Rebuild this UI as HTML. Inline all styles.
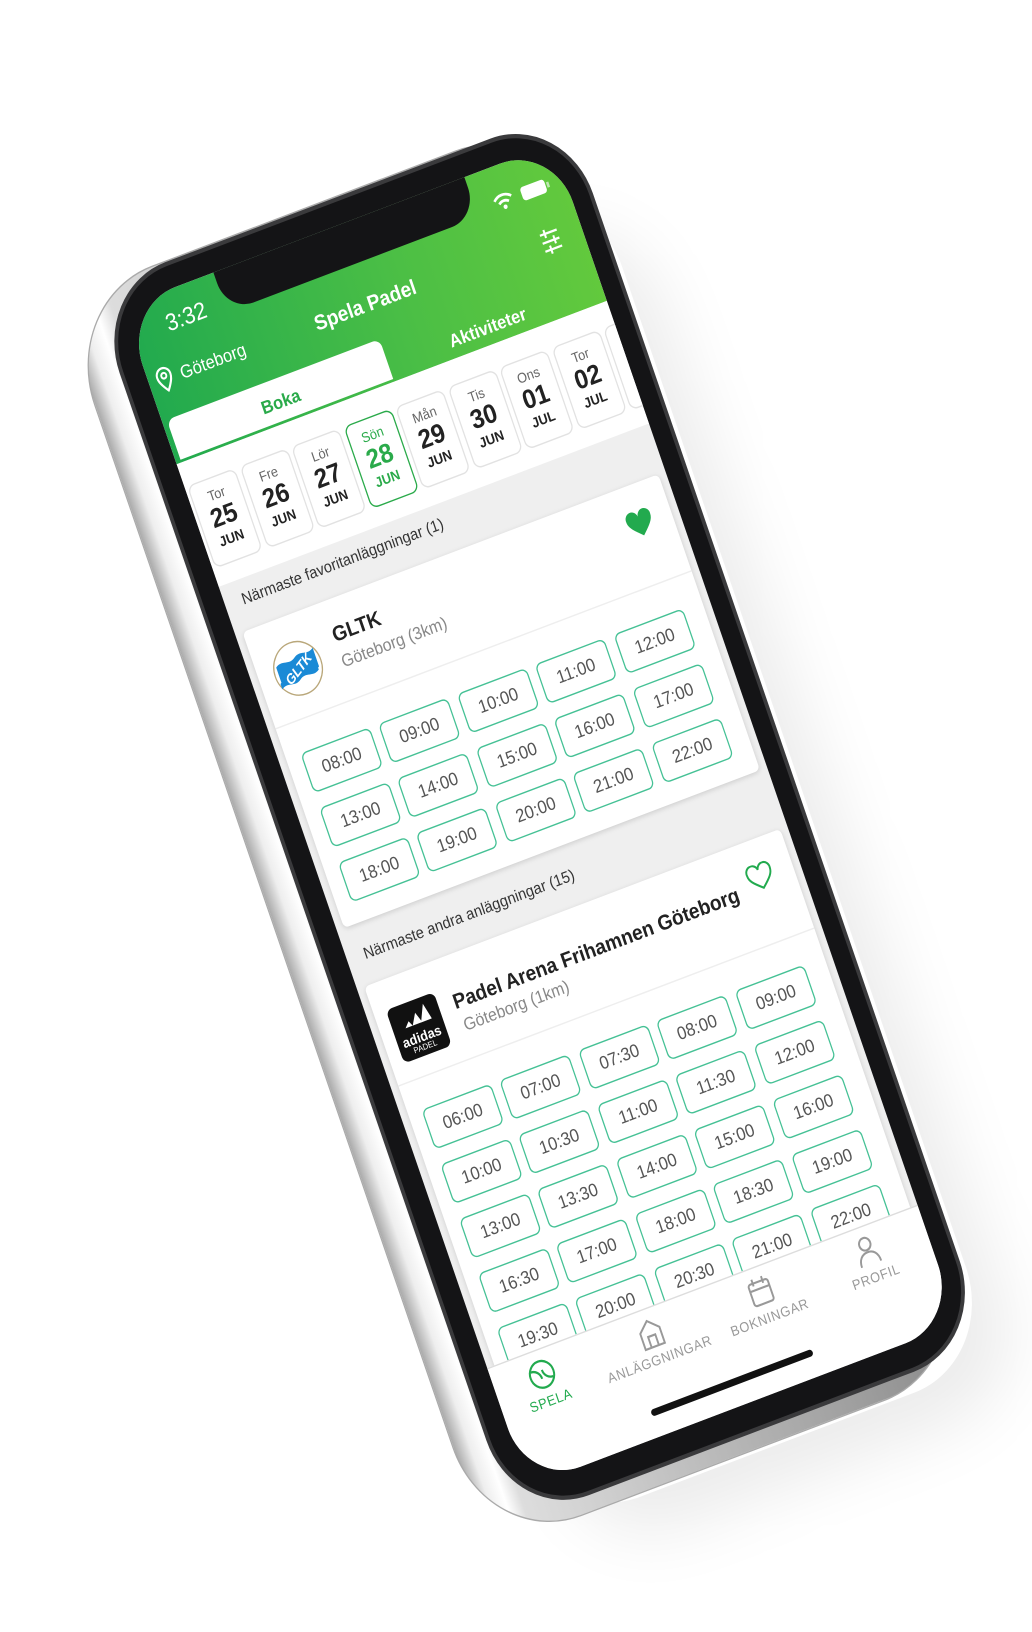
<!DOCTYPE html>
<html><head><meta charset="utf-8"><style>
*{box-sizing:border-box;margin:0;padding:0}
html,body{width:1032px;height:1632px;background:#fff;overflow:hidden;font-family:"Liberation Sans",sans-serif}
#wrap{position:absolute;left:0;top:0;width:360px;height:885px;transform-origin:0 0;transform:matrix(1.195,-0.454,0.458,1.333,122.6,307)}
.shadow{position:absolute;left:10px;top:30px;width:370px;height:890px;border-radius:70px;box-shadow:20px 30px 50px rgba(0,0,0,.08)}
.silver{position:absolute;left:-46px;top:-20px;width:410px;height:938px;border-radius:78px;background:linear-gradient(90deg,#aaa 0%,#eee 3%,#fff 6%,#ddd 9%,#888 100%);border:1px solid #aaa}
.black{position:absolute;left:-19px;top:-19px;width:396px;height:925px;border-radius:62px;background:#141416;border:3px solid #3a3a3c}
#scr{position:absolute;left:0;top:0;width:360px;height:885px;border-radius:44px;overflow:hidden;background:#efefef}
.abs{position:absolute}
.hdr{left:0;top:0;width:360px;height:118px;background:linear-gradient(90deg,#22aa4e,#4cbf45 60%,#62c93d)}
.notch{left:76px;top:-2px;width:210px;height:32px;background:#141416;border-radius:0 0 22px 22px}
.w{color:#fff}
.tab{left:4px;top:86px;width:178px;height:30px;background:#fff;border-radius:6px 6px 0 0}
.strip{left:0;top:118px;width:360px;height:92px;background:#fff}
.dc{position:absolute;top:135px;width:40px;height:62px;border:1px solid #e2e2e2;border-radius:6px;background:#fff;text-align:center;color:#222}
.dc .d{font-size:10px;color:#666;margin-top:7px}
.dc .n{font-size:19px;font-weight:bold;line-height:22px}
.dc .m{font-size:10px;font-weight:bold}
.dc.sel{border:1.5px solid #2aaa4a;color:#2aaa4a}
.dc.sel .d{color:#2aaa4a}
.lbl{font-size:11.5px;color:#333}
.card{background:#fff;box-shadow:0 1px 4px rgba(0,0,0,.15);border-radius:4px}
.s{position:absolute;width:58px;height:30px;border:1.3px solid #45c195;border-radius:5px;background:#fff;font-size:13px;color:#555;text-align:center;line-height:28px}
.title{font-size:15px;color:#222;font-weight:bold}
.sub{font-size:12.5px;color:#888}
.nav{left:0;top:796px;width:360px;height:90px;background:#fff;border-top:1px solid #ddd}
.nl{position:absolute;font-size:10px;letter-spacing:.5px;color:#999;text-align:center;width:100px}
</style></head><body>
<div id="wrap">
<div class="shadow"></div>
<div class="silver"></div>
<div class="black"></div>
<div id="scr">
<div class="abs hdr"></div>
<div class="abs notch"></div>
<div class="abs w" style="left:28px;top:13px;font-size:17px">3:32</div>
<svg class="abs" style="left:300px;top:18px" width="50" height="16" viewBox="0 0 50 16"><path d="M2 6a10 10 0 0 1 14 0M5 9a6 6 0 0 1 8 0" stroke="#fff" stroke-width="2" fill="none"/><circle cx="9" cy="12" r="1.6" fill="#fff"/><rect x="24" y="3" width="20" height="10" rx="2.5" fill="#fff"/><rect x="45" y="6" width="2" height="4" fill="#fff" opacity=".6"/></svg>
<svg class="abs" style="left:324px;top:54px" width="20" height="20" viewBox="0 0 20 20" stroke="#fff" stroke-width="1.6"><path d="M3 4h14M3 10h14M3 16h14M7 1v6M13 7v6M8 13v6"/></svg>
<svg class="abs" style="left:6px;top:49px" width="14" height="19" viewBox="0 0 14 19"><path d="M7 18C3 13 1.5 10 1.5 7a5.5 5.5 0 0 1 11 0c0 3-1.5 6-5.5 11z" fill="none" stroke="#fff" stroke-width="1.6"/><circle cx="7" cy="7" r="2" fill="none" stroke="#fff" stroke-width="1.5"/></svg>
<div class="abs w" style="left:26px;top:51px;font-size:13px">Göteborg</div>
<div class="abs w" style="left:130px;top:52px;font-size:15px;font-weight:bold;width:100px;text-align:center">Spela Padel</div>
<div class="abs tab"></div>
<div class="abs" style="left:4px;top:95px;width:178px;text-align:center;font-size:13px;font-weight:bold;color:#2aaa4a">Boka</div>
<div class="abs w" style="left:200px;top:98px;width:130px;text-align:center;font-size:13px;font-weight:bold">Aktiviteter</div>
<div class="abs strip"></div>
<div class="dc" style="left:2px"><div class="d">Tor</div><div class="n">25</div><div class="m">JUN</div></div>
<div class="dc" style="left:45.5px"><div class="d">Fre</div><div class="n">26</div><div class="m">JUN</div></div>
<div class="dc" style="left:89px"><div class="d">Lör</div><div class="n">27</div><div class="m">JUN</div></div>
<div class="dc sel" style="left:132.5px"><div class="d">Sön</div><div class="n">28</div><div class="m">JUN</div></div>
<div class="dc" style="left:176px"><div class="d">Mån</div><div class="n">29</div><div class="m">JUN</div></div>
<div class="dc" style="left:219.5px"><div class="d">Tis</div><div class="n">30</div><div class="m">JUN</div></div>
<div class="dc" style="left:263px"><div class="d">Ons</div><div class="n">01</div><div class="m">JUL</div></div>
<div class="dc" style="left:306.5px"><div class="d">Tor</div><div class="n">02</div><div class="m">JUL</div></div>
<div class="dc" style="left:350px"><div class="d">Fre</div><div class="n">03</div><div class="m">JUL</div></div>

<div class="abs lbl" style="left:14px;top:219px">Närmaste favoritanläggningar (1)</div>
<div class="abs card" style="left:6px;top:246px;width:348px;height:222px"></div>
<div class="abs" style="left:6px;top:318px;width:348px;height:1px;background:#eee"></div>
<svg class="abs" style="left:18px;top:264px" width="40" height="40" viewBox="0 0 40 40"><circle cx="20" cy="20" r="19" fill="#fff" stroke="#b9a77a" stroke-width="1"/><path d="M4 14c6-4 10 2 16-2s10 2 16-2v14c-6 4-10-2-16 2s-10-2-16 2z" fill="#1a8ad6"/><path d="M3 26c6-4 10 2 16-2s10 2 16-2v4c-6 4-10-2-16 2s-10-2-16 2z" fill="#1a8ad6"/><text x="20" y="24" font-size="10" font-weight="bold" fill="#fff" text-anchor="middle" font-style="italic" transform="rotate(-30 20 20)">GLTK</text></svg>
<div class="abs title" style="left:72px;top:263px">GLTK</div>
<div class="abs sub" style="left:72px;top:284px">Göteborg (3km)</div>
<svg class="abs" style="left:317px;top:264px" width="22" height="20" viewBox="0 0 22 20"><path d="M11 19C4 13 1 10 1 6a5 5 0 0 1 10-1 5 5 0 0 1 10 1c0 4-3 7-10 13z" fill="#22aa4e"/></svg>
<div class="s" style="left:18px;top:341px">08:00</div><div class="s" style="left:83px;top:341px">09:00</div><div class="s" style="left:149px;top:341px">10:00</div><div class="s" style="left:214px;top:341px">11:00</div><div class="s" style="left:280px;top:341px">12:00</div>
<div class="s" style="left:18px;top:382px">13:00</div><div class="s" style="left:83px;top:382px">14:00</div><div class="s" style="left:149px;top:382px">15:00</div><div class="s" style="left:214px;top:382px">16:00</div><div class="s" style="left:280px;top:382px">17:00</div>
<div class="s" style="left:18px;top:423px">18:00</div><div class="s" style="left:83px;top:423px">19:00</div><div class="s" style="left:149px;top:423px">20:00</div><div class="s" style="left:214px;top:423px">21:00</div><div class="s" style="left:280px;top:423px">22:00</div>

<div class="abs lbl" style="left:14px;top:485px">Närmaste andra anläggningar (15)</div>
<div class="abs card" style="left:6px;top:512px;width:348px;height:330px"></div>
<div class="abs" style="left:6px;top:586px;width:348px;height:1px;background:#eee"></div>
<div class="abs" style="left:16px;top:533px;width:40px;height:40px;background:#111;border-radius:5px;color:#fff;text-align:center">
<svg width="24" height="14" viewBox="0 0 24 14" style="margin-top:4px"><path d="M2 13l4-4 2 4zM8 13l5-8 3 8zM15 13l6-12 3 12z" fill="#fff"/></svg>
<div style="font-size:10px;line-height:9px;font-weight:bold">adidas</div><div style="font-size:6px;line-height:7px">PADEL</div></div>
<div class="abs title" style="left:68px;top:537px">Padel Arena Frihamnen Göteborg</div>
<div class="abs sub" style="left:70px;top:556px">Göteborg (1km)</div>
<svg class="abs" style="left:316px;top:529px" width="22" height="20" viewBox="0 0 22 20"><path d="M11 18C4 12.5 1.5 10 1.5 6.2a4.6 4.6 0 0 1 9.5-1.6 4.6 4.6 0 0 1 9.5 1.6c0 3.8-2.5 6.3-9.5 11.8z" fill="none" stroke="#22aa4e" stroke-width="1.5"/></svg>
<div class="s" style="left:17px;top:608px">06:00</div><div class="s" style="left:82px;top:608px">07:00</div><div class="s" style="left:148px;top:608px">07:30</div><div class="s" style="left:213px;top:608px">08:00</div><div class="s" style="left:279px;top:608px">09:00</div>
<div class="s" style="left:17px;top:649px">10:00</div><div class="s" style="left:82px;top:649px">10:30</div><div class="s" style="left:148px;top:649px">11:00</div><div class="s" style="left:213px;top:649px">11:30</div><div class="s" style="left:279px;top:649px">12:00</div>
<div class="s" style="left:17px;top:690px">13:00</div><div class="s" style="left:82px;top:690px">13:30</div><div class="s" style="left:148px;top:690px">14:00</div><div class="s" style="left:213px;top:690px">15:00</div><div class="s" style="left:279px;top:690px">16:00</div>
<div class="s" style="left:17px;top:731px">16:30</div><div class="s" style="left:82px;top:731px">17:00</div><div class="s" style="left:148px;top:731px">18:00</div><div class="s" style="left:213px;top:731px">18:30</div><div class="s" style="left:279px;top:731px">19:00</div>
<div class="s" style="left:17px;top:772px">19:30</div><div class="s" style="left:82px;top:772px">20:00</div><div class="s" style="left:148px;top:772px">20:30</div><div class="s" style="left:213px;top:772px">21:00</div><div class="s" style="left:279px;top:772px">22:00</div>

<div class="abs nav"></div>
<svg class="abs" style="left:28px;top:803px" width="22" height="22" viewBox="0 0 22 22" fill="none" stroke="#22aa4e" stroke-width="1.6"><circle cx="11" cy="11" r="9.5"/><path d="M3 7c4 0 7 3 7 7M19 15c-4 0-7-3-7-7"/></svg>
<div class="nl" style="left:-11px;top:829px;color:#22aa4e">SPELA</div>
<svg class="abs" style="left:120px;top:803px" width="20" height="22" viewBox="0 0 20 22" fill="none" stroke="#999" stroke-width="1.5"><path d="M2 21V9l8-7 8 7v12zM7 21v-8h6v8"/></svg>
<div class="nl" style="left:80px;top:829px">ANLÄGGNINGAR</div>
<svg class="abs" style="left:212px;top:803px" width="20" height="22" viewBox="0 0 20 22" fill="none" stroke="#999" stroke-width="1.5"><rect x="2" y="4" width="16" height="16" rx="2"/><path d="M2 9h16M6 1v5M14 1v5"/></svg>
<div class="nl" style="left:172px;top:829px">BOKNINGAR</div>
<svg class="abs" style="left:301px;top:803px" width="20" height="22" viewBox="0 0 20 22" fill="none" stroke="#999" stroke-width="1.5"><circle cx="10" cy="6" r="4.5"/><path d="M2 21c0-6 3.5-9 8-9s8 3 8 9"/></svg>
<div class="nl" style="left:261px;top:829px">PROFIL</div>
<div class="abs" style="left:110px;top:865px;width:135px;height:5px;background:#111;border-radius:3px"></div>
</div>
</div>
</body></html>
